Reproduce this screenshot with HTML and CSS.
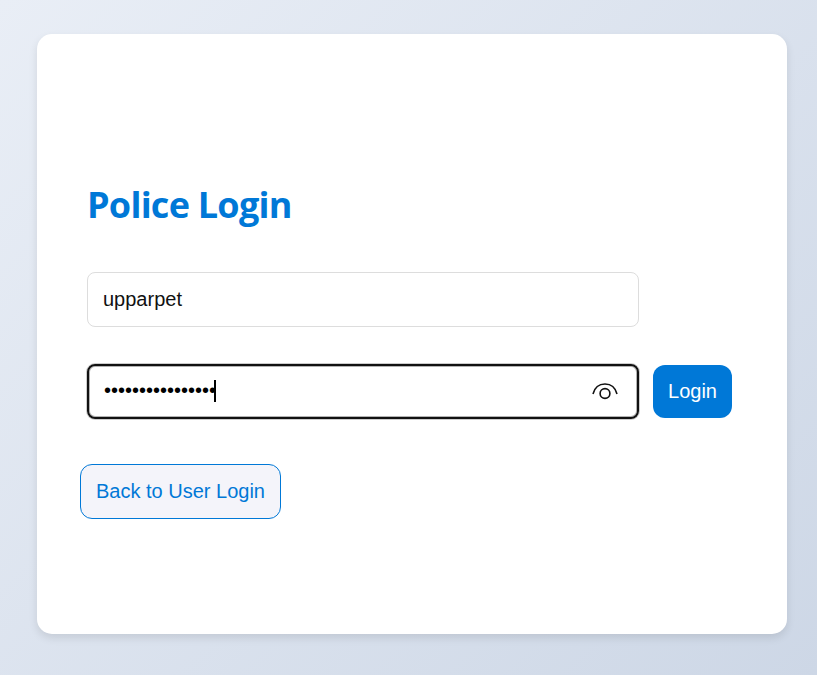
FILE: index.html
```html
<!DOCTYPE html>
<html lang="en">
<head>
<meta charset="utf-8">
<title>Police Login</title>
<link rel="stylesheet" href="styles.css">
</head>
<body>
<main class="card">
  <h1 class="title">Police Login</h1>
  <form class="form">
    <div class="field">upparpet</div>
    <div class="row">
      <div class="field focused">
        <span class="dots">••••••••••••••••</span><span class="caret"></span>
        <svg class="eye" width="28" height="20" viewBox="0 0 28 20" fill="none" stroke="#111" stroke-width="1.6">
          <path d="M2 12C3.600 5.800 8.200 2 14 2S24.400 5.800 26 12"/>
          <circle cx="14" cy="11.500" r="4.900"/>
        </svg>
      </div>
      <button class="btn" type="button">Login</button>
    </div>
    <button class="btn back" type="button">Back to User Login</button>
  </form>
</main>
</body>
</html>
```

FILE: styles.css
```css
* { box-sizing: border-box; }
body {
  margin: 0;
  height: 675px;
  padding: 34px 0 0 37px;
  overflow: hidden;
  background: linear-gradient(135deg, #e9eef6, #cdd7e6);
  font-family: "Liberation Sans", Arial, sans-serif;
  font-size: 20px;
}
.card {
  width: 750px;
  height: 600px;
  padding: 146px 50px 0;
  background: #fff;
  border-radius: 15px;
  box-shadow: 0 4px 8px rgba(0, 0, 0, 0.1);
}
.title {
  margin: 0 0 42px;
  height: 50px;
  line-height: 50px;
  font-family: "Segoe UI", "Open Sans", sans-serif;
  font-size: 36px;
  font-weight: 700;
  letter-spacing: -0.75px;
  white-space: nowrap;
  color: #0078d7;
}
.field {
  display: flex;
  align-items: center;
  width: 552px;
  height: 55px;
  padding: 0 15px;
  border: 1px solid #ddd;
  border-radius: 8px;
  color: #111;
}
.row {
  display: flex;
  align-items: center;
  gap: 14px;
  margin: 37px 0 45px;
}
.focused {
  border: 2px solid #111;
  padding: 0 18px 2px 15px;
  box-shadow: 0 0 0 1px rgba(0, 0, 0, 0.2), inset 0 0 0 1px rgba(0, 0, 0, 0.3);
}
.dots { color: #000; }
.caret {
  width: 2px;
  height: 22px;
  margin-left: -2px;
  background: #000;
}
.eye {
  margin: 2px 0 0 auto;
}
.btn {
  height: 53px;
  width: 79px;
  padding: 0;
  border: 0;
  border-radius: 12px;
  background: #0078d7;
  color: #fff;
  font: inherit;
}
.back {
  display: block;
  width: 201px;
  height: 55px;
  margin-left: -7px;
  border: 1px solid #0078d7;
  background: #f4f4fa;
  color: #0078d7;
}
```
